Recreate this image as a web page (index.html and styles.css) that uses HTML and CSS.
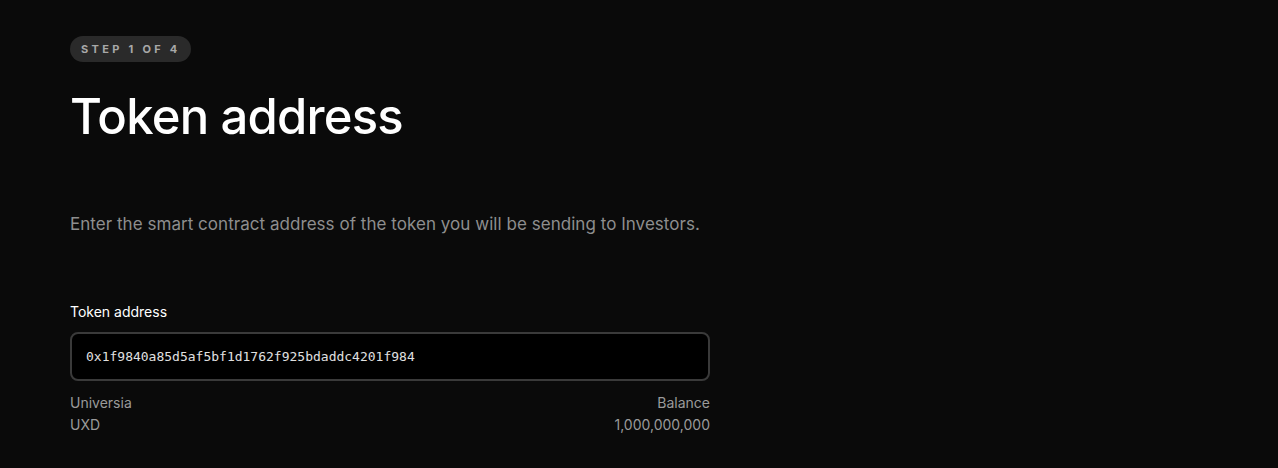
FILE: index.html
```html
<!DOCTYPE html>
<html>
<head>
<meta charset="utf-8">
<link rel="stylesheet" href="styles.css">
</head>
<body>
<main class="page">
  <span class="badge">STEP 1 OF 4</span>
  <h1 class="title">Token address</h1>
  <p class="desc">Enter the smart contract address of the token you will be sending to Investors.</p>
  <label class="label">Token address</label>
  <div class="input">0x1f9840a85d5af5bf1d1762f925bdaddc4201f984</div>
  <div class="meta">
    <div class="col">
      <span>Universia</span>
      <span>UXD</span>
    </div>
    <div class="col right">
      <span>Balance</span>
      <span>1,000,000,000</span>
    </div>
  </div>
</main>
</body>
</html>
```

FILE: styles.css
```css
html, body {
  margin: 0;
  background: #0a0a0a;
  color: #fff;
  font-family: Inter, "Noto Sans", sans-serif;
}
.page {
  width: 640px;
  padding: 36px 0 0 70px;
  display: flex;
  flex-direction: column;
  align-items: flex-start;
}
.badge {
  height: 26px;
  line-height: 26px;
  padding: 0 10px 0 11px;
  border-radius: 13px;
  background: #2a2a2a;
  color: #a8a8a8;
  font-size: 11px;
  font-weight: 700;
  letter-spacing: 3.3px;
}
.title {
  margin: 25px 0 0;
  font-size: 49px;
  font-weight: 500;
  letter-spacing: -0.8px;
  line-height: 60px;
}
.desc {
  margin: 65px 0 0;
  font-size: 17px;
  color: #8e8e8e;
  line-height: 24px;
  letter-spacing: 0.04px;
}
.label {
  margin-top: 67px;
  font-size: 14px;
  line-height: 18px;
  font-weight: 400;
}
.input {
  box-sizing: border-box;
  margin-top: 11px;
  width: 640px;
  height: 49px;
  border: 2px solid #3a3a3a;
  border-radius: 8px;
  background: #000;
  padding: 0 14px;
  display: flex;
  align-items: center;
  font-family: "DejaVu Sans Mono", monospace;
  font-size: 13px;
  color: #e0e0e0;
}
.meta {
  margin-top: 13px;
  width: 640px;
  display: flex;
  justify-content: space-between;
  font-size: 14px;
  color: #9a9a9a;
}
.col {
  display: flex;
  flex-direction: column;
  gap: 4px;
  line-height: 18px;
}
.col.right { align-items: flex-end; }
```
